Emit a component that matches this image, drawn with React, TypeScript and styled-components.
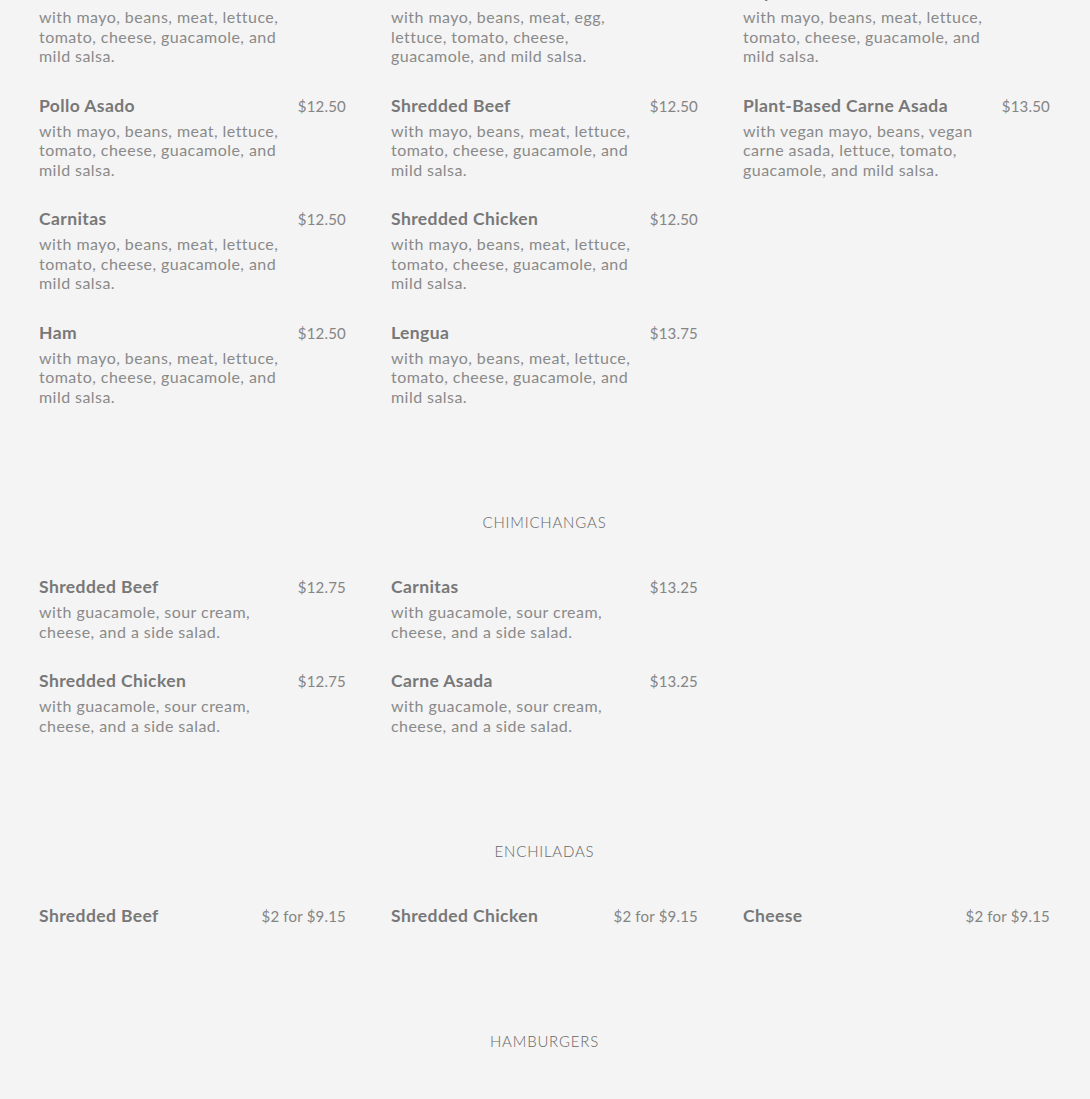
import React from "react";
import styled, { createGlobalStyle } from "styled-components";

interface Dish {
  name: string;
  price: string;
  desc?: string;
}

const FULL = "with mayo, beans, meat, lettuce, tomato, cheese, guacamole, and mild salsa.";
const SIDE = "with guacamole, sour cream, cheese, and a side salad.";

const tortas: Dish[][] = [
  [
    { name: "Carne Asada", price: "$12.50", desc: FULL },
    { name: "Pollo Asado", price: "$12.50", desc: FULL },
    { name: "Carnitas", price: "$12.50", desc: FULL },
    { name: "Ham", price: "$12.50", desc: FULL },
  ],
  [
    { name: "Chorizo", price: "$12.50", desc: "with mayo, beans, meat, egg, lettuce, tomato, cheese, guacamole, and mild salsa." },
    { name: "Shredded Beef", price: "$12.50", desc: FULL },
    { name: "Shredded Chicken", price: "$12.50", desc: FULL },
    { name: "Lengua", price: "$13.75", desc: FULL },
  ],
  [
    { name: "Tripa", price: "$13.50", desc: FULL },
    {
      name: "Plant-Based Carne Asada",
      price: "$13.50",
      desc: "with vegan mayo, beans, vegan carne asada, lettuce, tomato, guacamole, and mild salsa.",
    },
  ],
];

const chimichangas: Dish[][] = [
  [
    { name: "Shredded Beef", price: "$12.75", desc: SIDE },
    { name: "Shredded Chicken", price: "$12.75", desc: SIDE },
  ],
  [
    { name: "Carnitas", price: "$13.25", desc: SIDE },
    { name: "Carne Asada", price: "$13.25", desc: SIDE },
  ],
  [],
];

const enchiladas: Dish[][] = [
  [{ name: "Shredded Beef", price: "$2 for $9.15" }],
  [{ name: "Shredded Chicken", price: "$2 for $9.15" }],
  [{ name: "Cheese", price: "$2 for $9.15" }],
];

const hamburgers: Dish[][] = [
  [{ name: "Hamburger", price: "$9.50", desc: "with mayo, lettuce, tomato, onion, and pickles." }],
  [{ name: "Cheeseburger", price: "$10.25", desc: "with mayo, lettuce, tomato, onion, and pickles." }],
  [{ name: "Bacon Burger", price: "$11.50", desc: "with mayo, lettuce, tomato, onion, and pickles." }],
];

const GlobalStyle = createGlobalStyle`
  html, body {
    margin: 0;
    background: #f4f4f4;
    overflow: hidden;
  }
  body {
    font-family: Lato, "Open Sans", sans-serif;
  }
`;

const Page = styled.div`
  height: 1099px;
  overflow: hidden;
  padding: 0 40px 0 39px;
`;

/* the screenshot is scrolled a little into the first list */
const Scroller = styled.div`
  margin-top: -20px;
`;

const Section = styled.section<{ $tight?: boolean }>`
  margin-bottom: ${(p) => (p.$tight ? "103px" : "106px")};
`;

const Heading = styled.h2`
  margin: 0 0 43px;
  text-align: center;
  font-size: 15px;
  line-height: 20px;
  font-weight: 300;
  letter-spacing: 0.8px;
  color: #666;
`;

const Grid = styled.div`
  display: grid;
  grid-template-columns: repeat(3, 1fr);
  column-gap: 45px;
  align-items: start;
`;

const Column = styled.div`
  display: flex;
  flex-direction: column;
  gap: 28px;
`;

const Item = styled.div`
  display: flex;
  flex-direction: column;
`;

const Head = styled.div`
  display: flex;
  justify-content: space-between;
  align-items: baseline;
  height: 24px;
  line-height: 24px;
`;

const Name = styled.span`
  font-size: 17.5px;
  font-weight: 700;
  letter-spacing: 0.4px;
  color: #787878;
`;

const Price = styled.span`
  font-size: 15px;
  letter-spacing: 0.2px;
  color: #858585;
`;

const Desc = styled.p`
  margin: 3px 0 0;
  max-width: 245px;
  font-size: 16px;
  line-height: 19.5px;
  letter-spacing: 0.45px;
  color: #8a8a8a;
`;

const Menu: React.FC<{ cols: Dish[][] }> = ({ cols }) => (
  <Grid>
    {cols.map((col, i) => (
      <Column key={i}>
        {col.map((d) => (
          <Item key={d.name}>
            <Head>
              <Name>{d.name}</Name>
              <Price>{d.price}</Price>
            </Head>
            {d.desc && <Desc>{d.desc}</Desc>}
          </Item>
        ))}
      </Column>
    ))}
  </Grid>
);

export default function App() {
  return (
    <Page>
      <GlobalStyle />
      <Scroller>
        <Section>
          <Menu cols={tortas} />
        </Section>
        <Section>
          <Heading>CHIMICHANGAS</Heading>
          <Menu cols={chimichangas} />
        </Section>
        <Section $tight>
          <Heading>ENCHILADAS</Heading>
          <Menu cols={enchiladas} />
        </Section>
        <Section>
          <Heading>HAMBURGERS</Heading>
          <Menu cols={hamburgers} />
        </Section>
      </Scroller>
    </Page>
  );
}
